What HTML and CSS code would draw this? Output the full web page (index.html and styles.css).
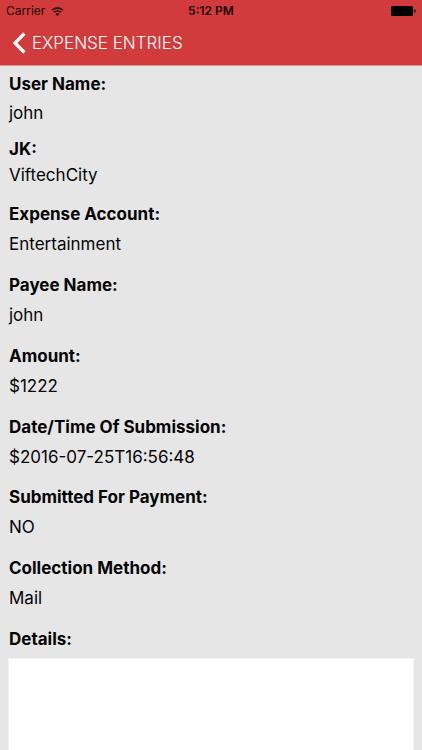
FILE: index.html
```html
<!DOCTYPE html>
<html lang="en">
<head>
<meta charset="utf-8">
<meta name="viewport" content="width=device-width, initial-scale=1">
<title>Expense Entries</title>
<link rel="stylesheet" href="styles.css">
</head>
<body>
<header class="header">
  <div class="status">
    <div class="status-network">
      <span>Carrier</span>
      <svg class="wifi" viewBox="0 0 14 10" aria-hidden="true">
        <path d="M1 3.6C4.4 0.3 9.6 0.3 13 3.6M3.1 5.9C5.3 3.8 8.7 3.8 10.9 5.9" fill="none" stroke="currentColor" stroke-width="1.7"/>
        <path d="M7 10L4.8 7.7C6 6.6 8 6.6 9.2 7.7Z" fill="currentColor"/>
      </svg>
    </div>
    <time class="status-time">5:12 PM</time>
    <svg class="battery" viewBox="0 0 25 10" aria-hidden="true">
      <rect width="22" height="10" rx="1.5"/>
      <path d="M23 3.3Q24.7 3.5 24.7 5T23 6.7Z"/>
    </svg>
  </div>
  <nav class="nav">
    <a class="back" href="#">
      <svg class="chevron" viewBox="0 0 14 22" aria-hidden="true">
        <path d="M12.4 1.5L3 11L12.4 20.5" fill="none" stroke="currentColor" stroke-width="3.2"/>
      </svg>
      <span>EXPENSE ENTRIES</span>
    </a>
  </nav>
</header>
<main class="content">
  <dl class="fields">
    <div class="field field-short"><dt>User Name:</dt><dd>john</dd></div>
    <div class="field field-tight"><dt>JK:</dt><dd>ViftechCity</dd></div>
    <div class="field"><dt>Expense Account:</dt><dd>Entertainment</dd></div>
    <div class="field"><dt>Payee Name:</dt><dd>john</dd></div>
    <div class="field"><dt>Amount:</dt><dd>$1222</dd></div>
    <div class="field field-date"><dt>Date/Time Of Submission:</dt><dd>$2016-07-25T16:56:48</dd></div>
    <div class="field"><dt>Submitted For Payment:</dt><dd>NO</dd></div>
    <div class="field"><dt>Collection Method:</dt><dd>Mail</dd></div>
  </dl>
  <label class="details-label" for="details">Details:</label>
  <textarea class="details" id="details"></textarea>
</main>
</body>
</html>
```
FILE: styles.css
```css
* {
  box-sizing: border-box;
}

body {
  display: flex;
  flex-direction: column;
  min-height: 100vh;
  margin: 0;
  background: #e6e6e6;
  color: #050505;
  font: 17px/22px Inter, "Liberation Sans", sans-serif;
}

.header {
  padding-bottom: 1px;
  border-bottom: 1px solid #dc9c9d;
  background: #d23b3c;
}

.status {
  display: grid;
  grid-template-columns: 1fr auto 1fr;
  align-items: center;
  height: 22px;
  padding: 0 6px;
  color: #1c0505;
  font-size: 12px;
}

.status-network {
  display: flex;
  align-items: center;
  gap: 6px;
}

.status-time {
  font-weight: 600;
}

.wifi {
  width: 13px;
  height: 9px;
}

.battery {
  justify-self: end;
  width: 25px;
  height: 10px;
  fill: #000;
}

.nav {
  display: flex;
  align-items: center;
  height: 42px;
  padding: 0 12px;
}

.back {
  display: flex;
  align-items: center;
  gap: 6px;
  color: #fff;
  font-weight: 300;
  text-decoration: none;
}

.chevron {
  width: 14px;
  height: 22px;
}

.content {
  display: flex;
  flex: 1;
  flex-direction: column;
  padding: 7px 8px 0;
}

.fields {
  margin: 0;
}

.field {
  display: flex;
  flex-direction: column;
  gap: 8px;
  padding: 0 1px 19px;
}

.field-short {
  gap: 7px;
  padding-bottom: 14px;
}

.field-tight {
  gap: 4px;
  padding-bottom: 17px;
}

.field-date {
  padding-bottom: 18px;
}

dt,
.details-label {
  font-weight: 700;
}

dd {
  margin: 0;
}

.details-label {
  padding: 0 1px 8px;
}

.details {
  flex: 1;
  width: 100%;
  min-height: 80px;
  padding: 8px;
  border: 1px solid #f2f2f2;
  border-bottom: 0;
  border-radius: 0;
  outline: 0;
  background: #fff;
  font: inherit;
  resize: none;
}
```
